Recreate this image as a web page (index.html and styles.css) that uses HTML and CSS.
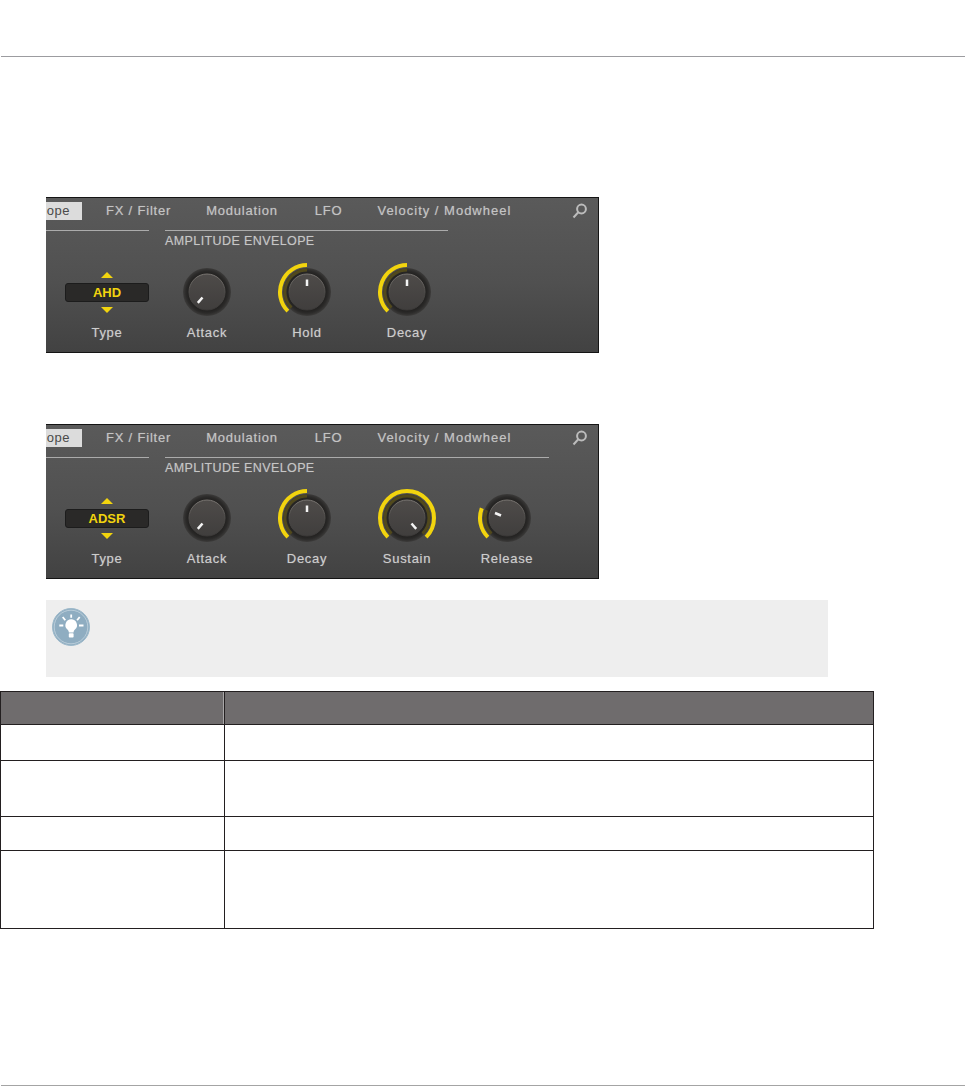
FILE: index.html
```html
<!DOCTYPE html>
<html lang="en">
<head>
<meta charset="utf-8">
<title>Amplitude Envelope</title>
<link rel="stylesheet" href="styles.css">
</head>
<body>
<svg class="defs" width="0" height="0" aria-hidden="true">
  <defs>
    <linearGradient id="cap-fill" x1="0" y1="0" x2="0" y2="1"><stop offset="0" stop-color="#4e4b49"/><stop offset="1" stop-color="#403e3d"/></linearGradient>
    <linearGradient id="cap-edge" x1="0" y1="0" x2="0" y2="1"><stop offset="0" stop-color="#7a7672"/><stop offset="0.55" stop-color="#4c4a48"/><stop offset="1" stop-color="#3a3837"/></linearGradient>
    <radialGradient id="well-fill" cx="0.5" cy="0.5" r="0.5"><stop offset="0.72" stop-color="#1e1d1c"/><stop offset="0.88" stop-color="#2b2a29"/><stop offset="1" stop-color="#3c3b3a"/></radialGradient>
  </defs>
</svg>
<header class="page-head"></header>

<section class="panel panel-ahd">
  <nav class="tabs">
    <span class="tab tab-active">ope</span>
    <span class="tab">FX / Filter</span>
    <span class="tab tab-mod">Modulation</span>
    <span class="tab tab-lfo">LFO</span>
    <span class="tab tab-vel">Velocity / Modwheel</span>
    <svg class="search" viewBox="0 0 16 16" width="16" height="16"><circle cx="9.500" cy="6" r="4.400"/><path d="M6.300 9.300 1.500 14.500"/></svg>
  </nav>
  <div class="sections">
    <div class="section section-type"></div>
    <div class="section section-env-short"><span class="section-name">AMPLITUDE ENVELOPE</span></div>
  </div>
  <div class="controls">
    <div class="control">
      <div class="selector"><i class="arrow arrow-up"></i><div class="display">AHD</div><i class="arrow arrow-down"></i></div>
      <span class="label">Type</span>
    </div>
    <div class="control">
      <svg class="knob" viewBox="0 0 60 60" width="60" height="60"><circle class="well" cx="30" cy="30" r="24"/><circle class="cap" cx="30" cy="30" r="18"/><path class="mark" d="M25.500 35.500 20.800 40.800"/></svg>
      <span class="label">Attack</span>
    </div>
    <div class="control">
      <svg class="knob" viewBox="0 0 60 60" width="60" height="60"><circle class="well" cx="30" cy="30" r="24"/><path class="glow" d="M14.400 45.600A22 22 0 0 1 30 8"/><path class="arc" d="M10.900 49.100A27 27 0 0 1 30 3"/><circle class="cap" cx="30" cy="30" r="18"/><path class="mark" d="M30 24V17.500"/></svg>
      <span class="label">Hold</span>
    </div>
    <div class="control">
      <svg class="knob" viewBox="0 0 60 60" width="60" height="60"><circle class="well" cx="30" cy="30" r="24"/><path class="glow" d="M14.400 45.600A22 22 0 0 1 30 8"/><path class="arc" d="M10.900 49.100A27 27 0 0 1 30 3"/><circle class="cap" cx="30" cy="30" r="18"/><path class="mark" d="M30 24V17.500"/></svg>
      <span class="label">Decay</span>
    </div>
  </div>
</section>

<section class="panel panel-adsr">
  <nav class="tabs">
    <span class="tab tab-active">ope</span>
    <span class="tab">FX / Filter</span>
    <span class="tab tab-mod">Modulation</span>
    <span class="tab tab-lfo">LFO</span>
    <span class="tab tab-vel">Velocity / Modwheel</span>
    <svg class="search" viewBox="0 0 16 16" width="16" height="16"><circle cx="9.500" cy="6" r="4.400"/><path d="M6.300 9.300 1.500 14.500"/></svg>
  </nav>
  <div class="sections">
    <div class="section section-type"></div>
    <div class="section section-env-long"><span class="section-name">AMPLITUDE ENVELOPE</span></div>
  </div>
  <div class="controls">
    <div class="control">
      <div class="selector"><i class="arrow arrow-up"></i><div class="display">ADSR</div><i class="arrow arrow-down"></i></div>
      <span class="label">Type</span>
    </div>
    <div class="control">
      <svg class="knob" viewBox="0 0 60 60" width="60" height="60"><circle class="well" cx="30" cy="30" r="24"/><circle class="cap" cx="30" cy="30" r="18"/><path class="mark" d="M25.500 35.500 20.800 40.800"/></svg>
      <span class="label">Attack</span>
    </div>
    <div class="control">
      <svg class="knob" viewBox="0 0 60 60" width="60" height="60"><circle class="well" cx="30" cy="30" r="24"/><path class="glow" d="M14.400 45.600A22 22 0 0 1 30 8"/><path class="arc" d="M10.900 49.100A27 27 0 0 1 30 3"/><circle class="cap" cx="30" cy="30" r="18"/><path class="mark" d="M30 24V17.500"/></svg>
      <span class="label">Decay</span>
    </div>
    <div class="control">
      <svg class="knob" viewBox="0 0 60 60" width="60" height="60"><circle class="well" cx="30" cy="30" r="24"/><path class="glow" d="M14.400 45.600A22 22 0 1 1 45.600 45.600"/><path class="arc" d="M10.900 49.100A27 27 0 1 1 49.100 49.100"/><circle class="cap" cx="30" cy="30" r="18"/><path class="mark" d="M34.500 35.500 39.200 40.800"/></svg>
      <span class="label">Sustain</span>
    </div>
    <div class="control">
      <svg class="knob" viewBox="0 0 60 60" width="60" height="60"><circle class="well" cx="30" cy="30" r="24"/><path class="glow" d="M14.400 45.600A22 22 0 0 1 9.500 22.100"/><path class="arc" d="M10.900 49.100A27 27 0 0 1 4.800 20.300"/><circle class="cap" cx="30" cy="30" r="18"/><path class="mark" d="M24 27.500 18 25"/></svg>
      <span class="label">Release</span>
    </div>
  </div>
</section>

<aside class="tip">
  <svg class="tip-icon" viewBox="0 0 38 38" width="38" height="38">
    <circle class="tip-disc" cx="19" cy="19" r="18.500"/>
    <circle class="tip-ring" cx="19" cy="19" r="16.800"/>
    <path class="tip-bulb" d="M19.200 11.300a5.800 5.800 0 0 0-4 10c1.100 1.100 1.600 2.100 1.700 3.200h4.600c.1-1.100.6-2.100 1.700-3.200a5.800 5.800 0 0 0-4-10z"/>
    <rect class="tip-bulb" x="16.800" y="25.200" width="4.800" height="4.300" rx="0.800"/>
    <path class="tip-rays" d="M19.200 6.500V9.800M10.700 9 13.300 12.300M27.700 9 25.100 12.300M7.300 17.500H11.300M27 17.500H31.500"/>
  </svg>
</aside>

<table class="params">
  <colgroup><col class="col-name"><col class="col-desc"></colgroup>
  <thead><tr class="row-head"><th></th><th></th></tr></thead>
  <tbody>
    <tr class="row-a"><td></td><td></td></tr>
    <tr class="row-b"><td></td><td></td></tr>
    <tr class="row-c"><td></td><td></td></tr>
    <tr class="row-d"><td></td><td></td></tr>
  </tbody>
</table>

<footer class="page-foot"></footer>
</body>
</html>
```
FILE: styles.css
```css
* { box-sizing: border-box; }

html, body { margin: 0; padding: 0; background: #fff; }

body {
  width: 965px;
  height: 1086px;
  overflow: hidden;
  font-family: "Liberation Sans", Arial, sans-serif;
}

.defs { position: absolute; }

.page-head {
  height: 57px;
  margin-left: 1px;
  border-bottom: 1px solid #9c9ca0;
}

.page-foot {
  height: 1px;
  margin: 156px 0 0 1px;
  background: #a4a4a4;
}

/* instrument panels */
.panel {
  width: 553px;
  margin-left: 46px;
  border: 1px solid #141414;
  border-left: 0;
  background: linear-gradient(180deg, #5a5a5a 0%, #505050 55%, #424242 100%);
  overflow: hidden;
  color: #c9c9c9;
}

.panel-ahd { height: 156px; margin-top: 140px; }
.panel-adsr { height: 155px; margin-top: 71px; }

.tabs {
  display: flex;
  align-items: center;
  gap: 24px;
  height: 18px;
  margin-top: 4px;
  font-size: 13px;
  letter-spacing: 0.8px;
  color: #c4c4c4;
  text-shadow: 0 0 1px rgba(200, 200, 200, 0.5);
}

.tab { flex: none; line-height: 15px; margin-bottom: 1px; }

.tab-active {
  width: 36px;
  height: 18px;
  line-height: 18px;
  margin-bottom: 0;
  padding-right: 12px;
  text-align: right;
  background: #dcdcdc;
  color: #4a4a4a;
  letter-spacing: 0.5px;
  white-space: nowrap;
  text-shadow: none;
}

.tab-mod { margin-left: 11px; }
.tab-lfo { margin-left: 13px; }
.tab-vel { margin-left: 11px; letter-spacing: 1px; }

.search {
  flex: none;
  margin-left: auto;
  margin-right: 10px;
  fill: none;
  stroke: #bcbcbc;
  stroke-width: 2;
}

.sections {
  display: flex;
  gap: 16px;
  margin-top: 10px;
}

.section { border-top: 1px solid #ababab; }
.section-type { width: 103px; }
.section-env-short { width: 283px; }
.section-env-long { width: 384px; }

.section-name {
  display: block;
  height: 16px;
  line-height: 20px;
  font-size: 12.500px;
  letter-spacing: 0.4px;
  color: #c6c6c6;
  white-space: nowrap;
  text-shadow: 0 0 1px rgba(200, 200, 200, 0.4);
}

.controls {
  display: flex;
  padding-left: 11px;
  margin-top: 15px;
}

.panel-adsr .controls { margin-top: 14px; }

.control {
  display: flex;
  flex-direction: column;
  align-items: center;
  width: 100px;
}

.label {
  margin-top: 4px;
  line-height: 14px;
  font-size: 13px;
  letter-spacing: 0.7px;
  color: #cdcdcd;
  text-shadow: 0 0 1px rgba(205, 205, 205, 0.5);
}

/* knobs */
.knob { display: block; }
.well { fill: url(#well-fill); }
.cap { fill: url(#cap-fill); stroke: url(#cap-edge); stroke-width: 1; }
.arc { fill: none; stroke: #f2d40e; stroke-width: 4; }
.glow { fill: none; stroke: #51491c; stroke-width: 3; }
.mark { fill: none; stroke: #f4f4f4; stroke-width: 2.500; }

/* type selector */
.selector {
  display: flex;
  flex-direction: column;
  align-items: center;
  justify-content: center;
  gap: 5px;
  height: 60px;
}

.display {
  width: 84px;
  height: 19px;
  line-height: 18px;
  border: 1px solid #1c1c1c;
  border-radius: 3px;
  background: #2a2928;
  color: #f2d40e;
  font-size: 13px;
  font-weight: 700;
  text-align: center;
}

.arrow {
  display: block;
  width: 0;
  height: 0;
  border-left: 6px solid transparent;
  border-right: 6px solid transparent;
}

.arrow-up { border-bottom: 6px solid #f2d40e; }
.arrow-down { border-top: 6px solid #f2d40e; }

/* tip box */
.tip {
  width: 782px;
  height: 77px;
  margin: 21px 0 0 46px;
  padding: 8px 0 0 6px;
  background: #eeeeee;
}

.tip-icon { display: block; }
.tip-disc { fill: #8fadc1; stroke: #9db9ca; stroke-width: 1; }
.tip-ring { fill: #8fadc1; stroke: #c5d6e0; stroke-width: 0.800; }
.tip-bulb { fill: #ffffff; }
.tip-rays { fill: none; stroke: #ffffff; stroke-width: 1.800; }

/* parameter table */
.params {
  width: 874px;
  margin-top: 14px;
  border-collapse: collapse;
  table-layout: fixed;
}

.col-name { width: 224px; }

.params th, .params td {
  padding: 0;
  border: 1px solid #231f20;
}

.params th { background: #6f6c6d; }
.params th:first-child { box-shadow: inset -1px 0 0 #a9a7a8; }

.row-head { height: 33px; }
.row-a { height: 36px; }
.row-b { height: 56px; }
.row-c { height: 34px; }
.row-d { height: 78px; }
```
